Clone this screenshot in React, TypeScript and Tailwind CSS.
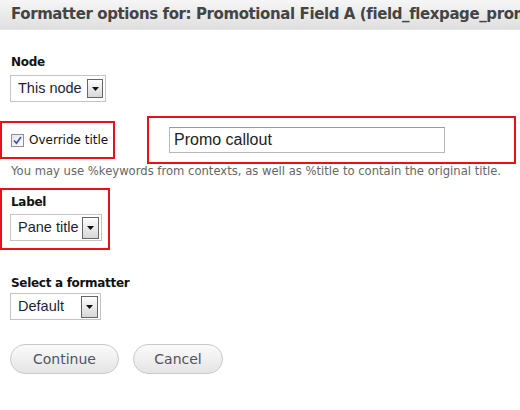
import React from "react";

const ui = { fontFamily: '"DejaVu Sans", Verdana, sans-serif' };
const arial = { fontFamily: '"Liberation Sans", Arial, sans-serif' };

function Arrow({ className }: { className: string }) {
  return (
    <span
      className={`shrink-0 flex items-center justify-center border border-[#666] bg-gradient-to-b from-[#fdfdfd] to-[#d8d8d8] ${className}`}
    >
      <svg width="7" height="4" viewBox="0 0 7 4">
        <path d="M0 0h7L3.5 4z" fill="#111" />
      </svg>
    </span>
  );
}

function Select({ value, w, arrow }: { value: string; w: string; arrow: string }) {
  return (
    <div
      className={`flex items-center justify-between h-[27px] border border-[#c4c4c4] bg-white pl-[7px] pr-[2px] ${w}`}
    >
      <span className="text-[14.5px] text-[#1d1f33] whitespace-nowrap" style={arial}>
        {value}
      </span>
      <Arrow className={arrow} />
    </div>
  );
}

export default function App() {
  return (
    <div className="w-[520px] h-[410px] bg-white overflow-hidden" style={ui}>
      <div className="h-[30px] flex items-center pl-[11px] bg-gradient-to-b from-[#f6f6f6] to-[#dfdfdf] border-b border-[#e6e6e6] whitespace-nowrap overflow-hidden">
        <span className="text-[15px] font-bold tracking-[-0.4px] text-[#444]">
          Formatter options for: Promotional Field A (field_flexpage_promo)
        </span>
      </div>

      <div className="ml-[11px] mt-[24px] text-[12px] tracking-[-0.3px] font-bold leading-[16px] text-[#111]">
        Node
      </div>
      <div className="ml-[10px] mt-[5px]">
        <Select value="This node" w="w-[96px]" arrow="w-[16px] h-[19px]" />
      </div>

      <div className="flex items-center mt-[14px]">
        <div className="w-[115px] h-[38px] border-2 border-[#e8111a] flex items-center pl-[9px]">
          <span className="w-[13px] h-[13px] border border-[#8f8f9f] bg-gradient-to-br from-[#e6e6ec] to-[#fafafa] flex items-center justify-center">
            <svg width="9" height="9" viewBox="0 0 9 9">
              <path d="M1 4.5l2.5 2.8L8 1" fill="none" stroke="#3b4fa0" strokeWidth="1.6" />
            </svg>
          </span>
          <span className="ml-[5px] text-[12px] text-[#111]">Override title</span>
        </div>
        <div className="ml-[32px] w-[369px] h-[48px] border-2 border-[#e8111a] flex items-center pl-[20px]">
          <div className="w-[276px] h-[26px] border border-[#b8b8b8] border-t-[#9a9a9a] flex items-center pl-[4px]">
            <span className="text-[16px] text-[#222]" style={arial}>
              Promo callout
            </span>
          </div>
        </div>
      </div>

      <div className="ml-[11px] text-[11.6px] leading-[14px] text-[#666] whitespace-nowrap">
        You may use %keywords from contexts, as well as %title to contain the original title.
      </div>

      <div className="mt-[10px] w-[110px] h-[62px] border-2 border-[#e8111a] pl-[9px] pt-[4px]">
        <div className="text-[12px] tracking-[-0.3px] font-bold leading-[16px] text-[#111]">Label</div>
        <div className="mt-[4px] -ml-[1px]">
          <Select value="Pane title" w="w-[92px]" arrow="w-[17px] h-[22px]" />
        </div>
      </div>

      <div className="ml-[11px] mt-[25px] text-[12px] tracking-[-0.3px] font-bold leading-[16px] text-[#111]">
        Select a formatter
      </div>
      <div className="ml-[10px] mt-[2px]">
        <Select value="Default" w="w-[91px]" arrow="w-[17px] h-[22px]" />
      </div>

      <div className="flex ml-[10px] mt-[24px] gap-[14px]">
        <button className="w-[109px] h-[30px] rounded-full border border-[#c9c9c9] bg-gradient-to-b from-[#fbfbfb] to-[#e4e4e4] text-[14px] text-[#4f5463]">
          Continue
        </button>
        <button className="w-[90px] h-[30px] rounded-full border border-[#c9c9c9] bg-gradient-to-b from-[#fbfbfb] to-[#e4e4e4] text-[14px] text-[#4f5463]">
          Cancel
        </button>
      </div>
    </div>
  );
}
